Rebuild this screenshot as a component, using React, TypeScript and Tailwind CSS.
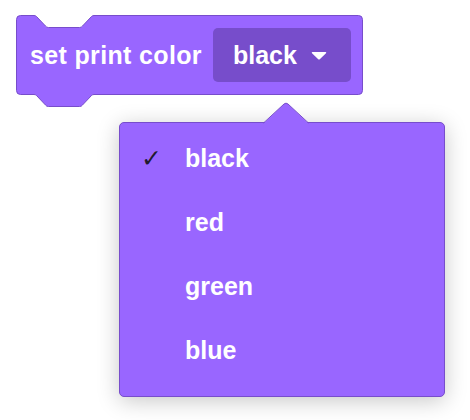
import React from "react"

const items = ["black", "red", "green", "blue"]

function Block() {
  return (
    <div className="relative w-[347px] h-[80px]">
      <svg className="absolute left-0 top-0" width="348" height="94" viewBox="0 0 348 94">
        <path
          d="M0.5 4.5 A4 4 0 0 1 4.5 0.5 H18 Q19.5 0.5 20.5 1.5 L29.5 11 Q30.5 12.5 32.5 12.5 H63.5 Q65.5 12.5 66.5 11 L75.5 1.5 Q76.5 0.5 78 0.5 H342.5 A4 4 0 0 1 346.5 4.5 V75.5 A4 4 0 0 1 342.5 79.5 H78 Q76.5 79.5 75.5 80.5 L66.5 90 Q65.5 91.5 63.5 91.5 H32.5 Q30.5 91.5 29.5 90 L20.5 80.5 Q19.5 79.5 18 79.5 H4.5 A4 4 0 0 1 0.5 75.5 Z"
          fill="#9966FF"
          stroke="#774DCB"
          strokeWidth="1"
        />
      </svg>
      <div className="relative flex items-center h-[80px] pl-[14px]">
        <span className="text-white text-[25px] font-bold tracking-[0.35px] leading-none">set print color</span>
        <div className="ml-[11px] flex items-center h-[54px] w-[138px] rounded-[5px] bg-[#774DCB] pl-[20px]">
          <span className="text-white text-[25px] font-bold leading-none">black</span>
          <svg className="ml-[14px]" width="16" height="9" viewBox="0 0 16 9">
            <path d="M1.5 1 H14.5 Q15.8 1 15 2.2 L9 8 Q8 9 7 8 L1 2.2 Q0.2 1 1.5 1 Z" fill="white" />
          </svg>
        </div>
      </div>
    </div>
  )
}

function Menu() {
  return (
    <div className="relative ml-[103px] mt-[27px] w-[326px] h-[275px] rounded-[5px] border border-[#774DCB] bg-[#9966FF] shadow-[0_4px_22px_rgba(0,0,0,0.22)] pt-[3px]">
      <svg className="absolute left-[143px] top-[-21px]" width="46" height="22" viewBox="0 0 46 22">
        <path d="M0 22 L21 2 Q23 0.3 25 2 L46 22 Z" fill="#9966FF" />
        <path d="M0.5 21 L21 2 Q23 0.3 25 2 L45.5 21" fill="none" stroke="#774DCB" strokeWidth="1" />
      </svg>
      {items.map((item, i) => (
        <div key={item} className="flex items-center h-[64px]">
          <span
            className="w-[65px] pl-[21px] text-[25px] font-bold text-[#111]/90 leading-none"
            style={{ fontFamily: "'DejaVu Sans', sans-serif" }}
          >
            {i === 0 ? "✓" : ""}
          </span>
          <span className="text-white text-[25px] font-bold leading-none">{item}</span>
        </div>
      ))}
    </div>
  )
}

export default function App() {
  return (
    <div
      className="w-[470px] h-[420px] bg-white pl-[16px] pt-[15px]"
      style={{ fontFamily: "'Liberation Sans', Arial, sans-serif" }}
    >
      <Block />
      <Menu />
    </div>
  )
}
